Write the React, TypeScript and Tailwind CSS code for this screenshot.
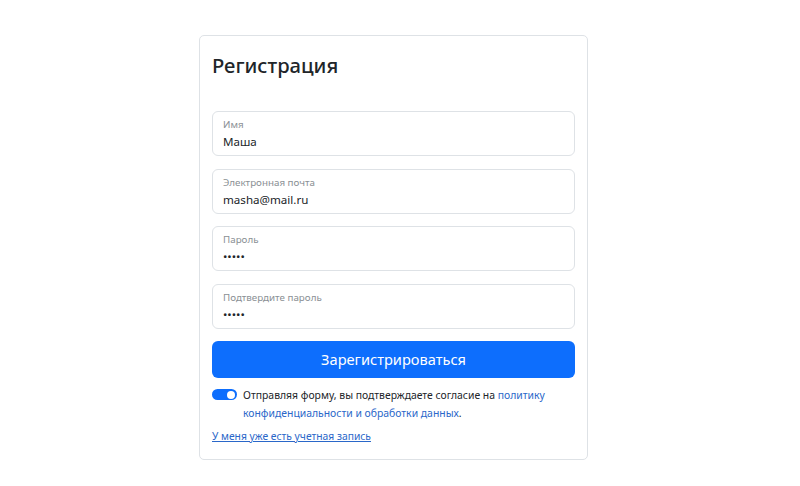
import React, { useState } from "react";

const Field: React.FC<{ label: string; value: string; type?: string }> = ({
  label,
  value,
  type = "text",
}) => {
  return (
    <div className="relative h-[45px] w-full rounded-[6px] border border-[#dee2e6] bg-white">
      <div className="absolute left-[10px] top-[6px] text-[9.8px] leading-[14px] text-[#8a8f94]">
        {label}
      </div>
      <input
        type={type}
        defaultValue={value}
        readOnly
        className="absolute left-[10px] right-[10px] top-[20px] h-[20px] bg-transparent text-[11.6px] leading-[20px] text-[#212529] outline-none"
      />
    </div>
  );
};

const App: React.FC = () => {
  const [agree, setAgree] = useState(true);

  return (
    <div
      className="min-h-screen w-full bg-white flex justify-center pt-[35px] pr-[13px]"
      style={{ fontFamily: '"Noto Sans", "Open Sans", sans-serif' }}
    >
      <div className="w-[389px] h-[425px] rounded-[5px] border border-[#dee2e6] bg-white px-[12px] pt-[15px]">
        <h2 className="text-[20.2px] leading-[28px] font-medium text-[#212529] mb-[32px]">
          Регистрация
        </h2>
        <form className="flex flex-col gap-[12.5px]" onSubmit={(e) => e.preventDefault()}>
          <Field label="Имя" value="Маша" />
          <Field label="Электронная почта" value="masha@mail.ru" />
          <Field label="Пароль" value="12345" type="password" />
          <Field label="Подтвердите пароль" value="12345" type="password" />
          <button
            type="submit"
            className="h-[37px] w-full rounded-[6px] bg-[#0d6efd] text-[14.6px] text-white"
          >
            Зарегистрироваться
          </button>
        </form>
        <div className="mt-[8px] flex items-start">
          <button
            type="button"
            onClick={() => setAgree(!agree)}
            className={`mt-[3px] relative h-[11px] w-[25px] shrink-0 rounded-full ${
              agree ? "bg-[#0d6efd]" : "bg-[#dee2e6]"
            }`}
          >
            <span
              className={`absolute top-[1.5px] h-[8px] w-[8px] rounded-full bg-white ${
                agree ? "right-[2px]" : "left-[2px]"
              }`}
            />
          </button>
          <p className="ml-[6px] text-[10.4px] leading-[18px] text-[#212529]">
            Отправляя форму, вы подтверждаете согласие на{" "}
            <a href="#" className="text-[#2a67c9]">
              политику конфиденциальности и обработки данных
            </a>
            .
          </p>
        </div>
        <a
          href="#"
          className="mt-[4px] inline-block text-[10.3px] leading-[18px] text-[#2a67c9] underline"
        >
          У меня уже есть учетная запись
        </a>
      </div>
    </div>
  );
};

export default App;
